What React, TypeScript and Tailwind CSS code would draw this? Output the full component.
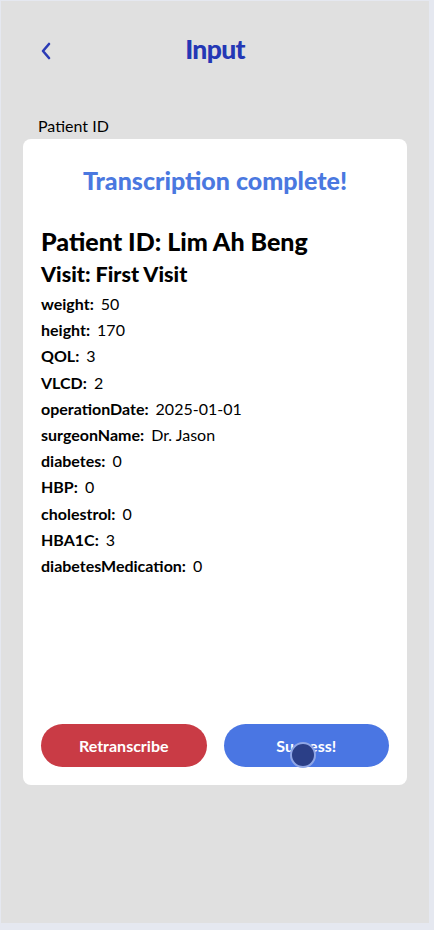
import React from "react";

const fields: [string, string][] = [
	["weight", "50"],
	["height", "170"],
	["QOL", "3"],
	["VLCD", "2"],
	["operationDate", "2025-01-01"],
	["surgeonName", "Dr. Jason"],
	["diabetes", "0"],
	["HBP", "0"],
	["cholestrol", "0"],
	["HBA1C", "3"],
	["diabetesMedication", "0"],
];

export default function App() {
	return (
		<div
			className="min-h-screen bg-[#e5e8f0] pt-px pl-px"
			style={{ fontFamily: "Lato, 'Open Sans', sans-serif" }}
		>
			<div className="w-[428px] h-[922px] bg-[#e0e0e0] flex flex-col">
				<header className="relative flex items-center justify-center h-[50px] mt-[24px]">
					<button className="absolute left-[38px] top-[16px] text-[#2b3bb5]">
						<svg width="14" height="20" viewBox="0 0 14 20" fill="none">
							<path
								d="M10 3 L4 10 L10 17"
								stroke="currentColor"
								strokeWidth="2.6"
								strokeLinecap="round"
								strokeLinejoin="round"
							/>
						</svg>
					</button>
					<h1 className="text-[26.5px] font-black text-[#2437b5] tracking-tight">
						Input
					</h1>
				</header>

				<p className="ml-[37px] mt-[41px] text-[16px] text-black leading-5">
					Patient ID
				</p>

				<div className="mx-[22px] mt-[3px] h-[646px] bg-white rounded-[8px] flex flex-col px-[18px]">
					<h2 className="mt-[27px] text-center text-[25px] font-black text-[#4a78e0] leading-7">
						Transcription complete!
					</h2>
					<h3 className="mt-[33px] text-[25px] font-black text-black leading-7">
						Patient ID: Lim Ah Beng
					</h3>
					<h4 className="mt-[7px] text-[21.5px] font-black text-black leading-6">
						Visit: First Visit
					</h4>
					<ul className="mt-[5px] flex flex-col">
						{fields.map(([k, v]) => (
							<li key={k} className="text-[16px] leading-[26.2px] text-black">
								<span className="font-bold">{k}:</span>
								<span className="ml-[7px]">{v}</span>
							</li>
						))}
					</ul>

					<div className="mt-auto mb-[18px] flex gap-[17px]">
						<button className="flex-1 h-[43px] rounded-full bg-[#c93b45] text-white text-[16px] font-bold">
							Retranscribe
						</button>
						<button className="relative flex-1 h-[43px] rounded-full bg-[#4a76e3] text-white text-[16px] font-bold">
							Success!
							<span className="absolute left-[66px] top-[18px] w-[26px] h-[26px] rounded-full bg-[#2b3f87] border-2 border-[#8fa6e6]" />
						</button>
					</div>
				</div>
			</div>
		</div>
	);
}
